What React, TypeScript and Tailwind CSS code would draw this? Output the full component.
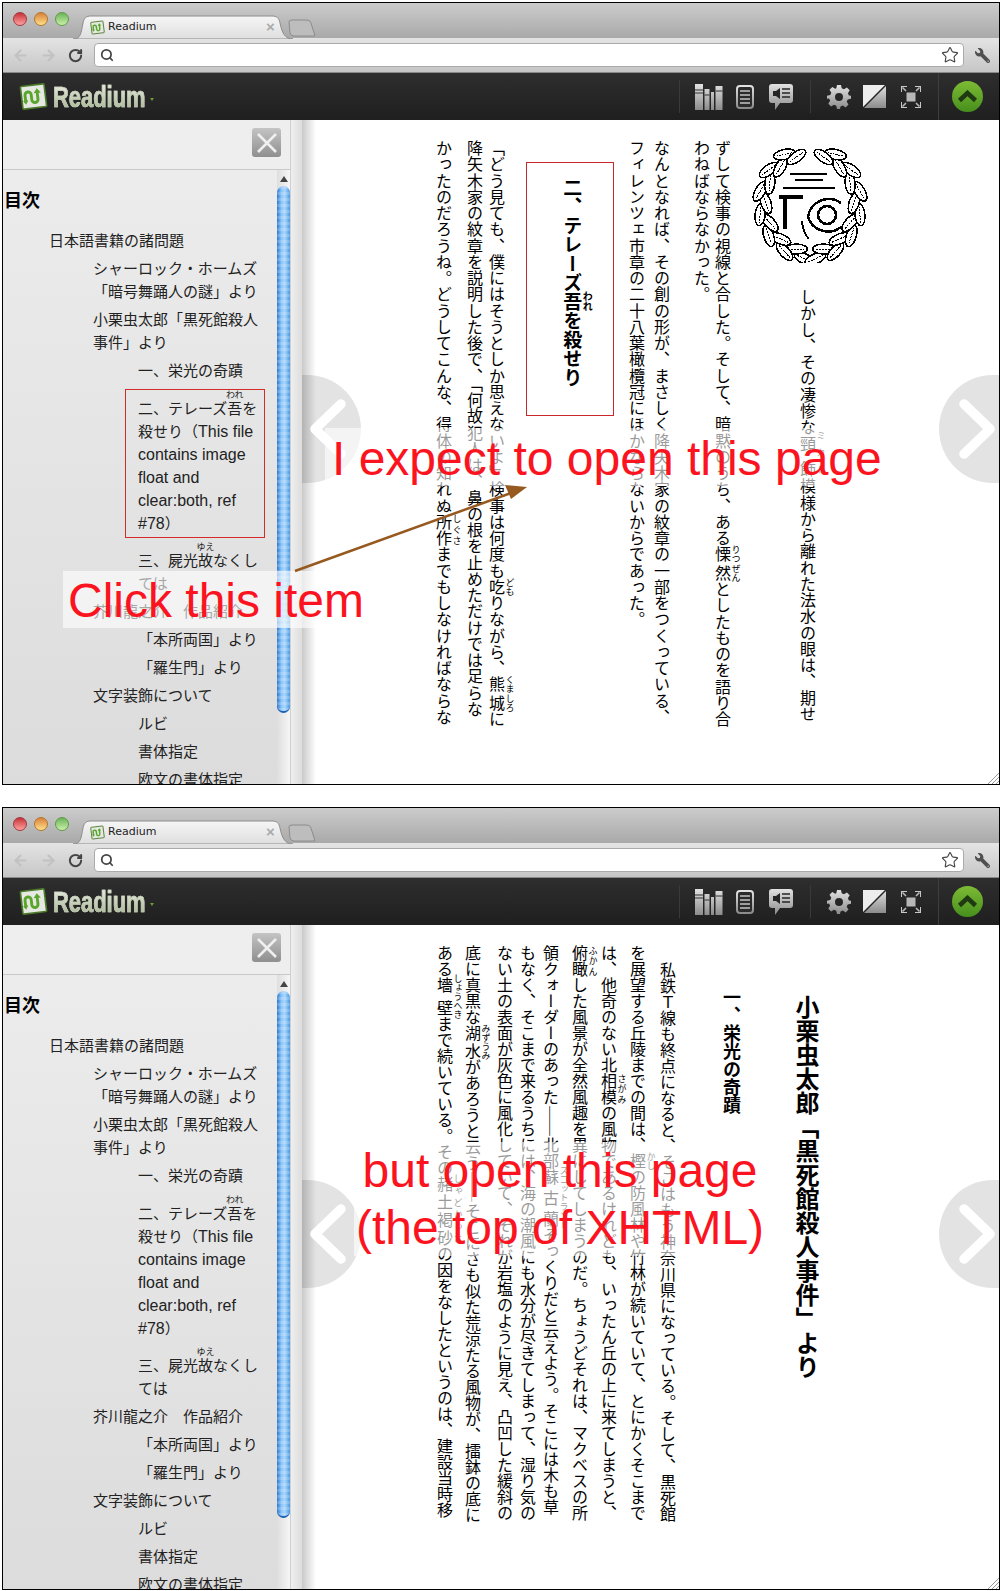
import React from "react";
import { ArrowLeft, ArrowRight, RotateCw, Search, Star } from "lucide-react";
import { FaWrench } from "react-icons/fa";

const R = ({ b, t }: { b: string; t: string }) => (
  <ruby>
    {b}
    <rt className="text-[9px] font-normal">{t}</rt>
  </ruby>
);

function Logo({ size }: { size: number }) {
  return (
    <svg width={size} height={size} viewBox="0 0 28 28" className="shrink-0">
      <g transform="rotate(-7 14 14)">
        <rect x="2.5" y="3" width="23" height="22" rx="1" fill="#e6e8e2" stroke="#4b7a2a" strokeWidth="1.6" />
        <path d="M6 19 V12 a3 3 0 0 1 6 0 v5 a3 3 0 0 0 6 0 V9" fill="none" stroke="#5aa52c" strokeWidth="2.8" />
        <path d="M14.5 11 L18 6.5 L21.5 11 Z" fill="#5aa52c" />
        <path d="M3.5 17 L6 21 L8.5 17 Z" fill="#5aa52c" />
      </g>
    </svg>
  );
}

function Grad({ id }: { id: string }) {
  return (
    <defs>
      <linearGradient id={id} x1="0" y1="0" x2="0" y2="1">
        <stop offset="0" stopColor="#e2e2e2" />
        <stop offset="1" stopColor="#8b8b8b" />
      </linearGradient>
    </defs>
  );
}

function TitleBar() {
  return (
    <div className="relative flex h-[35px] shrink-0 items-center bg-gradient-to-b from-[#cccccc] to-[#a9a9a9] pl-[10px]">
      <div className="flex gap-[7px] pb-[3px]">
        <span className="h-[14px] w-[14px] rounded-full border border-[#a33a40] bg-gradient-to-b from-[#c42f38] to-[#ff9fa0]" />
        <span className="h-[14px] w-[14px] rounded-full border border-[#b2762e] bg-gradient-to-b from-[#d8813a] to-[#ffe08a]" />
        <span className="h-[14px] w-[14px] rounded-full border border-[#5f9a48] bg-gradient-to-b from-[#6cb35a] to-[#c9f0a8]" />
      </div>
      <div className="relative ml-[4px] mt-[12px] flex h-[24px] w-[220px] items-center pl-[17px]">
        <svg width="220" height="24" viewBox="0 0 220 24" className="absolute left-0 top-0">
          <defs>
            <linearGradient id="tabg" x1="0" y1="0" x2="0" y2="1">
              <stop offset="0" stopColor="#f6f6f6" />
              <stop offset="1" stopColor="#dedede" />
            </linearGradient>
          </defs>
          <path d="M0 24 C8 24 8 18 10 8 C11 3 13 1 18 1 H199 C204 1 206 3 207 8 C209 18 212 24 220 24 Z" fill="url(#tabg)" stroke="#8c8c8c" />
        </svg>
        <span className="relative mt-[2px] flex items-center gap-[3px] font-['DejaVu_Sans',sans-serif] text-[11px] text-[#222]">
          <Logo size={15} />
          Readium
        </span>
        <span className="absolute left-[193px] top-[3px] font-['Liberation_Sans',sans-serif] text-[15px] font-bold leading-[18px] text-[#aaaaaa]">×</span>
      </div>
      <svg width="30" height="18" viewBox="0 0 30 18" className="ml-[-5px] mt-[14px]">
        <path d="M1 3 Q1 1 4 1 H19 Q22 1 23 4 L27 17 H6 Q3 17 2 14 Z" fill="#bdbdbd" stroke="#8c8c8c" />
      </svg>
    </div>
  );
}

function NavBar() {
  return (
    <div className="flex h-[35px] shrink-0 items-center border-b border-[#8a8a8a] bg-gradient-to-b from-[#e4e4e4] to-[#c6c6c6] pl-[9px]">
      <ArrowLeft size={17} strokeWidth={3} color="#c2c2c2" />
      <ArrowRight size={17} strokeWidth={3} color="#c2c2c2" className="ml-[11px]" />
      <RotateCw size={15} strokeWidth={3.2} color="#444444" className="ml-[11px]" />
      <div className="ml-[11px] flex h-[24px] w-[870px] items-center justify-between rounded-[4px] border border-[#aaaaaa] bg-white pl-[5px] pr-[4px]">
        <Search size={14} strokeWidth={3} color="#444444" />
        <Star size={18} strokeWidth={1.5} color="#444444" fill="#ffffff" />
      </div>
      <FaWrench size={15} color="#4f4f4f" className="ml-[11px] -scale-x-100" />
    </div>
  );
}

function ReadingBar() {
  return (
    <div className="flex h-[47px] shrink-0 items-center bg-gradient-to-b from-[#2e2e2e] to-[#1f1f1f]">
      <div className="ml-[16px] flex items-center">
        <Logo size={29} />
        <span className="ml-[5px] origin-left scale-x-[0.73] bg-gradient-to-b from-[#f2f5ea] to-[#9fae8c] bg-clip-text font-['Liberation_Sans',sans-serif] text-[30px] font-bold leading-[34px] text-transparent [-webkit-text-stroke:0.7px_#c6cfba]">
          Readium
        </span>
        <span className="ml-[-30px] mt-[5px] h-0 w-0 border-x-[2.5px] border-t-[3px] border-x-transparent border-t-[#6c9a34]" />
      </div>
      <div className="ml-auto flex items-center pr-[16px]">
        <span className="h-[33px] w-px bg-[#3a3a3a]" />
        <svg width="28" height="26" viewBox="0 0 28 26" className="ml-[15px]">
          <Grad id="i1" />
          <path d="M0 0h8v26H0zM9.500 5h5v21h-5zM16 8h3v18h-3zM20.500 2h7v24h-7z" fill="url(#i1)" />
          <path d="M0 6h8M0 9h8M9.500 11h5M20.500 7h7" stroke="#333" />
        </svg>
        <svg width="18" height="24" viewBox="0 0 18 24" className="ml-[13px]">
          <Grad id="i2" />
          <rect x="1" y="1" width="16" height="22" rx="3" fill="#2b2b2b" stroke="url(#i2)" strokeWidth="2" />
          <path d="M4 6h10M4 10h10M4 14h10M4 18h10" stroke="#c4c4c4" strokeWidth="1.6" />
        </svg>
        <svg width="24" height="26" viewBox="0 0 24 26" className="ml-[15px]">
          <Grad id="i3" />
          <path d="M3 0h18a3 3 0 0 1 3 3v13a3 3 0 0 1-3 3H11l-5 7v-7H3a3 3 0 0 1-3-3V3a3 3 0 0 1 3-3z" fill="url(#i3)" />
          <path d="M4 7h3l4-3v11l-4-3H4z" fill="#262626" />
          <path d="M13 5h8M13 9h8M13 13h8" stroke="#262626" strokeWidth="1.6" />
        </svg>
        <span className="ml-[17px] h-[33px] w-px bg-[#3a3a3a]" />
        <svg width="24" height="24" viewBox="0 0 24 24" className="ml-[16px]">
          <Grad id="i4" />
          <path fillRule="evenodd" d="M10 0h4l.7 3.300 2.300 1 2.900-1.800 2.800 2.800-1.800 2.900 1 2.300L24 10.700v3l-3.300.7-1 2.300 1.800 2.900-2.800 2.800-2.900-1.800-2.300 1L13 24h-3l-.7-3.300-2.300-1-2.900 1.800-2.800-2.800 1.800-2.900-1-2.300L0 13.700v-3l3.300-.7 1-2.300L2.500 4.800l2.800-2.800 2.900 1.800 1.100-.5zM12 8a4 4 0 1 0 0 8 4 4 0 0 0 0-8z" fill="url(#i4)" />
        </svg>
        <svg width="23" height="23" viewBox="0 0 23 23" className="ml-[12px]">
          <Grad id="i5" />
          <rect x="0" y="0" width="23" height="23" fill="#ededed" />
          <path d="M23 0v23H0z" fill="url(#i5)" />
          <path d="M23 0L0 23" stroke="#262626" strokeWidth="1.5" />
        </svg>
        <svg width="20" height="22" viewBox="0 0 20 22" className="ml-[15px]">
          <rect x="5.500" y="6.500" width="9" height="9" fill="#b8b8b8" />
          <path d="M0 6V0h6M20 6V0h-6M0 16v6h6M20 16v6h-6" fill="none" stroke="#c8c8c8" strokeWidth="2" />
          <path d="M1.500 1.500L5 5M18.500 1.500L15 5M1.500 20.500L5 17M18.500 20.500L15 17" stroke="#b8b8b8" strokeWidth="1.600" />
        </svg>
        <span className="ml-[17px] h-[47px] w-px bg-[#3e3e3e]" />
        <div className="ml-[13px] flex h-[31px] w-[31px] items-center justify-center rounded-full bg-gradient-to-b from-[#7dbb35] to-[#468f1d]">
          <svg width="21" height="13" viewBox="0 0 21 13">
            <path d="M2.500 10.500 L10.500 3 L18.500 10.500" fill="none" stroke="#1f3a12" strokeWidth="4.500" />
          </svg>
        </div>
      </div>
    </div>
  );
}

const liBase = "mb-[5px] leading-[23px]";

function Toc() {
  return (
    <div className="h-full overflow-hidden bg-gradient-to-b from-[#ececec] to-[#dcdcdc] font-['Liberation_Sans','Noto_Sans_CJK_JP',sans-serif] text-[15px] text-[#222]">
      <h2 className="ml-[1px] pt-[14px] font-['Noto_Sans_CJK_JP',sans-serif] text-[18px] font-bold leading-[30px] text-black">目次</h2>
      <ul className="mt-[15px] w-[261px] pl-[46px]">
        <li className={liBase}>日本語書籍の諸問題</li>
        <li>
          <ul className="pl-[44px]">
            <li className={liBase}>シャーロック・ホームズ「暗号舞踊人の謎」より</li>
            <li className={liBase}>小栗虫太郎「黒死館殺人事件」より</li>
            <li>
              <ul className="pl-[45px]">
                <li className="mb-[8px] leading-[23px]">一、栄光の奇蹟</li>
                <li className="mb-[7px] leading-[23px]">
                  二、テレーズ<R b="吾" t="われ" />を殺せり（<span className="text-[16px]">This file contains image float and clear:both, ref #78</span>）
                </li>
                <li className={liBase}>
                  三、屍光<R b="故" t="ゆえ" />なくしては
                </li>
              </ul>
            </li>
            <li className={liBase}>芥川龍之介　作品紹介</li>
            <li>
              <ul className="pl-[45px]">
                <li className={liBase}>「本所両国」より</li>
                <li className={liBase}>「羅生門」より</li>
              </ul>
            </li>
            <li className={liBase}>文字装飾について</li>
            <li>
              <ul className="pl-[45px]">
                <li className={liBase}>ルビ</li>
                <li className={liBase}>書体指定</li>
                <li className={liBase}>欧文の書体指定</li>
              </ul>
            </li>
          </ul>
        </li>
      </ul>
    </div>
  );
}

function Sidebar() {
  return (
    <aside className="flex h-full w-[299px] shrink-0">
      <div className="flex h-full w-[288px] flex-col border-r border-[#cfcfcf]">
        <div className="flex h-[50px] shrink-0 justify-end border-b border-[#c9c9c9] bg-[#eeeeee] pr-[9px] pt-[8px]">
          <div className="flex h-[29px] w-[29px] items-center justify-center rounded-[3px] bg-gradient-to-b from-[#c4c4c4] to-[#8f8f8f]">
            <svg width="24" height="24" viewBox="0 0 24 24">
              <path d="M3 3 L21 21 M21 3 L3 21" stroke="#efefef" strokeWidth="2.600" />
            </svg>
          </div>
        </div>
        <div className="flex min-h-0 flex-1">
          <div className="w-[274px]">
            <Toc />
          </div>
          <div className="flex w-[13px] flex-col items-center bg-gradient-to-r from-[#dedede] to-[#f6f6f6]">
            <span className="mt-[6px] h-0 w-0 border-x-[4px] border-b-[6px] border-x-transparent border-b-[#444]" />
            <div className="mt-[4px] h-[527px] w-[13px] rounded-full border-b-2 border-[#1f62b4] bg-[repeating-linear-gradient(to_bottom,rgba(255,255,255,0.18)_0,rgba(255,255,255,0.18)_3px,rgba(0,0,0,0)_3px,rgba(0,0,0,0)_6px),linear-gradient(to_right,#2b78cf,#8cc6fa_35%,#a8d6fd_60%,#4a98e2)]" />
          </div>
        </div>
      </div>
      <div className="h-full w-[11px] bg-gradient-to-r from-[#efefef] to-[#dddddd]" />
    </aside>
  );
}

function Emblem() {
  const leaves: React.ReactNode[] = [];
  [-1, 1].forEach((side) => {
    for (let i = 0; i < 14; i++) {
      const t = ((6 + i * 12) * Math.PI) / 180;
      const r = 47 + (i % 2 === 0 ? 4 : -3);
      const x = 59 + side * r * Math.sin(t);
      const y = 56 + r * 1.1 * Math.cos(t);
      const rot = side * (-((t * 180) / Math.PI) + (i % 2 === 0 ? -18 : 18));
      leaves.push(
        <g key={`${side}-${i}`} transform={`translate(${x} ${y}) rotate(${rot})`}>
          <ellipse rx="11" ry="5" fill="#fff" stroke="#000" strokeWidth="1.500" />
          <path d="M-8 0H8" stroke="#000" strokeWidth="1" strokeDasharray="2 1" />
        </g>
      );
    }
  });
  return (
    <svg width="118" height="116" viewBox="0 0 118 116" shapeRendering="crispEdges" className="shrink-0">
      {leaves}
      <path d="M39 27H76M44 33H72M32 41H84" stroke="#000" strokeWidth="2" fill="none" />
      <path d="M28 50 H52 M34 50 V82" stroke="#000" strokeWidth="4" fill="none" />
      <circle cx="76" cy="68" r="9" fill="none" stroke="#000" strokeWidth="2.500" />
      <path d="M90 56 A21 21 0 0 0 57 70 A21 21 0 0 0 90 80" fill="none" stroke="#000" strokeWidth="2.500" />
      <path d="M51 74 Q52 86 58 92" fill="none" stroke="#000" strokeWidth="2" />
    </svg>
  );
}

const vt = "[writing-mode:vertical-rl] whitespace-nowrap tracking-[0.25px] text-[16px] leading-[24px] w-[24px] shrink-0 text-black";
const vtr = "[writing-mode:vertical-rl] whitespace-nowrap tracking-[0.25px] text-[16px] leading-[32px] w-[32px] shrink-0 text-black";
const vt2 = "[writing-mode:vertical-rl] whitespace-nowrap text-[16px] leading-[24px] w-[24px] shrink-0 text-black";
const vtr2 = "[writing-mode:vertical-rl] whitespace-nowrap text-[16px] leading-[32px] w-[32px] shrink-0 text-black";

function Page1() {
  return (
    <div className="flex h-full flex-row-reverse pr-[130px] font-['Noto_Sans_CJK_JP',sans-serif]">
      <div className="flex w-[118px] shrink-0 flex-col items-center pt-[27px]">
        <Emblem />
        <p className={`${vtr} mt-[26px]`}>
          しかし、その凄惨な
          <ruby>
            頸飾
            <rt className="text-[9px] font-normal tracking-[8px]">ミカド</rt>
          </ruby>
          模様から離れた法水の眼は、期せ
        </p>
      </div>
      <p className={`${vtr} mr-[10px] pt-[20px]`}>
        ずして検事の視線と合した。そして、暗黙のうち、ある<R b="慄然" t="りつぜん" />としたものを語り合
      </p>
      <p className={`${vt} mr-[-5px] pt-[20px]`}>わねばならなかった。</p>
      <p className={`${vt} mr-[16px] pt-[20px]`}>なんとなれば、その創の形が、まさしく降矢木家の紋章の一部をつくっている、</p>
      <p className={`${vt} mr-[1px] pt-[20px]`}>フィレンツェ市章の二十八葉橄欖冠にほかならないからであった。</p>
      <div className="mr-[11px] mt-[42px] flex h-[254px] w-[88px] shrink-0 justify-center border border-[#c8282c] pl-[5px] pt-[15px]">
        <h3 className="whitespace-nowrap text-[19px] font-bold leading-[40px] text-black [writing-mode:vertical-rl]">
          二、テレーズ
          <ruby>
            吾<rt className="text-[10px] font-bold">われ</rt>
          </ruby>
          を殺せり
        </h3>
      </div>
      <p className={`${vtr} mr-[11px] pt-[20px]`}>
        「どう見ても、僕にはそうとしか思えないよ」検事は何度も<R b="吃" t="ども" />りながら、<R b="熊城" t="くましろ" />に
      </p>
      <p className={`${vt} mr-[-4px] pt-[20px]`}>
        降矢木家の紋章を説明した後で、「何故犯人は、鼻の根を止めただけでは足らな
      </p>
      <p className={`${vtr} mr-[1px] pt-[20px]`}>
        かったのだろうね。どうしてこんな、得体の知れぬ<R b="所作" t="しぐさ" />までもしなければならな
      </p>
    </div>
  );
}

function Page2() {
  return (
    <div className="flex h-full flex-row-reverse pr-[176px] font-['Noto_Sans_CJK_JP',sans-serif]">
      <h1 className="w-[32px] shrink-0 whitespace-nowrap pt-[70px] text-[24px] font-bold leading-[32px] text-black [writing-mode:vertical-rl]">
        小栗虫太郎「黒死館殺人事件」より
      </h1>
      <h2 className="mr-[47px] w-[24px] shrink-0 whitespace-nowrap pt-[63px] text-[18px] font-bold leading-[24px] text-black [writing-mode:vertical-rl]">
        一、栄光の奇蹟
      </h2>
      <p className={`${vt2} mr-[40px] pt-[37px]`}>私鉄Ｔ線も終点になると、そこはもう神奈川県になっている。そして、黒死館</p>
      <p className={`${vtr2} mr-[0px] pt-[20px]`}>
        を展望する丘陵までの間は、<R b="樫" t="かし" />の防風林や竹林が続いていて、とにかくそこまで
      </p>
      <p className={`${vtr2} mr-[-3px] pt-[20px]`}>
        は、他奇のない北<R b="相模" t="さがみ" />の風物であるけれども、いったん丘の上に来てしまうと、
      </p>
      <p className={`${vtr2} mr-[-3px] pt-[20px]`}>
        <R b="俯瞰" t="ふかん" />した風景が全然風趣を異にしてしまうのだ。ちょうどそれは、マクベスの所
      </p>
      <p className={`${vtr2} mr-[-3px] pt-[20px]`}>
        領クォーダーのあった――北部<R b="蘇古蘭" t="スコットランド" />そっくりだと云えよう。そこには木も草
      </p>
      <p className={`${vt2} mr-[-3px] pt-[20px]`}>もなく、そこまで来るうちには、海の潮風にも水分が尽きてしまって、湿り気の</p>
      <p className={`${vt2} mr-[-1px] pt-[20px]`}>ない土の表面が灰色に風化していて、それが岩塩のように見え、凸凹した緩斜の</p>
      <p className={`${vtr2} mr-[2px] pt-[20px]`}>
        底に真黒な<R b="湖水" t="みずうみ" />があろうと云う――そこにさも似た荒涼たる風物が、擂鉢の底に
      </p>
      <p className={`${vtr2} mr-[-4px] pt-[20px]`}>
        ある<R b="墻壁" t="しょうへき" />まで続いている。その
        <ruby>
          赭土褐砂
          <rt className="text-[9px] font-normal tracking-[3px]">しゃどかっさ</rt>
        </ruby>
        の因をなしたというのは、建設当時移
      </p>
    </div>
  );
}

function Paddles() {
  return (
    <>
      <div className="absolute left-0 top-[255px] flex h-[108px] w-[59px] items-center rounded-r-[54px] bg-black/[.11]">
        <svg width="40" height="66" viewBox="0 0 40 66" className="ml-[6px]">
          <path d="M33 8 L7 33 L33 58" fill="none" stroke="#fff" strokeWidth="9.500" strokeLinecap="round" strokeLinejoin="round" />
        </svg>
      </div>
      <div className="absolute right-0 top-[255px] flex h-[108px] w-[60px] items-center rounded-l-[54px] bg-black/[.11]">
        <svg width="40" height="66" viewBox="0 0 40 66" className="ml-[18px]">
          <path d="M7 8 L33 33 L7 58" fill="none" stroke="#fff" strokeWidth="9.500" strokeLinecap="round" strokeLinejoin="round" />
        </svg>
      </div>
    </>
  );
}

function Grip() {
  return (
    <svg width="12" height="12" viewBox="0 0 12 12" className="absolute bottom-0 right-0">
      <path d="M1 12L12 1M5 12L12 5M9 12L12 9" stroke="#9a9a9a" />
    </svg>
  );
}

function Window({ children, overlay }: { children: React.ReactNode; overlay: React.ReactNode }) {
  return (
    <section className="relative ml-[2px] flex h-[783px] w-[998px] flex-col overflow-hidden border border-black bg-white">
      <TitleBar />
      <NavBar />
      <ReadingBar />
      <div className="flex min-h-0 flex-1">
        <Sidebar />
        <div className="relative min-w-0 flex-1 bg-[linear-gradient(to_right,#c9c9c9,#ffffff_14px)]">
          {children}
          <Paddles />
          <Grip />
        </div>
      </div>
      {overlay}
    </section>
  );
}

const red = "font-['Liberation_Sans',sans-serif] text-[48px] text-[#fb1420] whitespace-nowrap";

export default function App() {
  return (
    <div className="flex h-[1591px] w-[1001px] flex-col gap-[22px] bg-white pt-[2px]">
      <Window
        overlay={
          <>
            <div className="absolute left-[122px] top-[386px] h-[149px] w-[140px] border border-[#d42a2a]" />
            <div className={`absolute left-[322px] top-[425px] h-[58px] w-[560px] bg-white/60 pl-[7px] leading-[62px] ${red}`}>I expect to open this page</div>
            <div className={`absolute left-[60px] top-[568px] h-[57px] w-[280px] bg-white/60 pl-[5px] leading-[59px] ${red}`}>Click this item</div>
            <svg width="996" height="781" viewBox="0 0 996 781" className="absolute left-0 top-0">
              <path d="M292 568 L508 490" stroke="#96591f" strokeWidth="2.500" />
              <path d="M524 484 L502 482 L508 496 Z" fill="#96591f" />
            </svg>
          </>
        }
      >
        <Page1 />
      </Window>
      <Window
        overlay={
          <div className={`absolute left-[351px] top-[334px] flex h-[114px] w-[412px] flex-col items-center bg-white/60 leading-[57px] ${red}`}>
            <span>but open this page</span>
            <span>(the top of XHTML)</span>
          </div>
        }
      >
        <Page2 />
      </Window>
    </div>
  );
}
